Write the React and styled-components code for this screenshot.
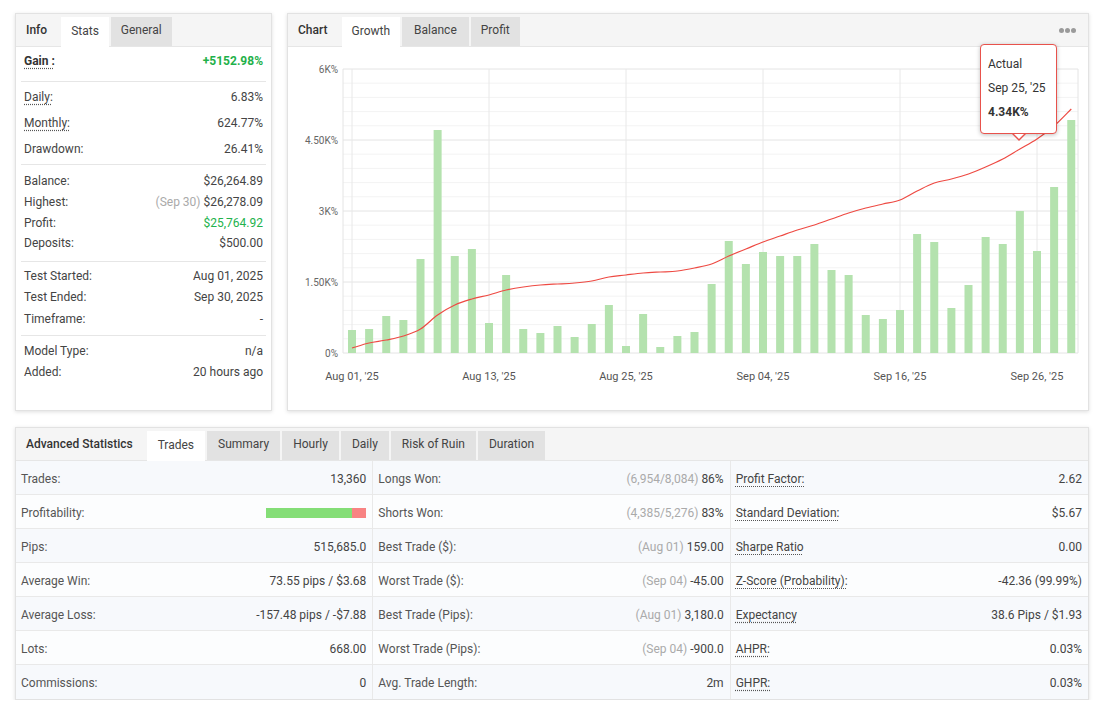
import React from 'react';
import styled, { createGlobalStyle } from 'styled-components';

const GlobalStyle = createGlobalStyle`
  body {
    margin: 0;
    background: #fff;
    font-family: Roboto, "Liberation Sans", sans-serif;
    font-size: 12px;
    color: #444;
  }
  * { box-sizing: border-box; }
`;

const Page = styled.div`
  width: 1100px;
  padding: 13px 11px 0 15px;
`;

const TopRow = styled.div`
  display: flex;
  gap: 15px;
  height: 398px;
`;

const Panel = styled.div`
  position: relative;
  background: #fff;
  border: 1px solid #e2e2e2;
  box-shadow: 0 1px 4px rgba(0, 0, 0, 0.13);
  width: ${p => p.width || 'auto'};
  flex: ${p => (p.grow ? 1 : 'none')};
  display: flex;
  flex-direction: column;
`;

const Header = styled.div`
  height: 33px;
  flex: none;
  display: flex;
  align-items: flex-end;
  padding-left: 10px;
  background: #f5f5f5;
  border-bottom: 1px solid #e6e6e6;
`;

const HeaderLabel = styled.div`
  align-self: center;
  margin-right: 14px;
  font-weight: 500;
  color: #333;
`;

const Tab = styled.div`
  height: ${p => (p.active ? '30px' : '29px')};
  margin-bottom: ${p => (p.active ? '-1px' : '0')};
  margin-right: 2px;
  padding: 0 ${p => p.pad || 10}px 3px;
  display: flex;
  align-items: center;
  background: ${p => (p.active ? '#fff' : '#e2e2e2')};
  color: #444;
`;

const Dots = styled.div`
  margin-left: auto;
  margin-right: 12px;
  align-self: center;
  display: flex;
  gap: 1px;
  span {
    width: 5px;
    height: 5px;
    border-radius: 50%;
    background: #9a9a9a;
  }
`;

/* ---------- stats panel ---------- */

const StatsBody = styled.div`
  padding: 0 5px;
`;

const Group = styled.div`
  padding: ${p => p.pad || '5px 0 6px'};
  border-bottom: ${p => (p.last ? 'none' : '1px solid #e6e6e6')};
`;

const Row = styled.div`
  height: ${p => p.h || 21}px;
  padding: 0 3px;
  display: flex;
  align-items: center;
  justify-content: space-between;
  color: #444;
`;

const Dotted = styled.span`
  font-weight: ${p => (p.bold ? 700 : 400)};
  color: ${p => (p.bold ? '#333' : 'inherit')};
  text-decoration: underline dotted #555;
  text-underline-offset: 3px;
`;

const Value = styled.span`
  color: ${p => p.color || '#444'};
  font-weight: ${p => (p.bold ? 700 : 400)};
`;

const Muted = styled.span`
  color: #aaa;
  margin-right: 3px;
`;

/* ---------- chart ---------- */

const ChartBody = styled.div`
  flex: 1;
`;

const Tooltip = styled.div`
  position: absolute;
  left: 692px;
  top: 30px;
  width: 77px;
  height: 90px;
  padding: 7px 0 0 7px;
  background: #fff;
  border: 1.5px solid #e8524c;
  border-radius: 4px;
  box-shadow: 0 1px 4px rgba(0, 0, 0, 0.25);
  color: #333;
  div { height: 24px; line-height: 24px; }
  &::before, &::after {
    content: '';
    position: absolute;
    left: 31px;
    border-style: solid;
  }
  &::before {
    bottom: -8px;
    border-width: 7px 7px 0 7px;
    border-color: #e8524c transparent transparent transparent;
  }
  &::after {
    bottom: -5.5px;
    left: 32.5px;
    border-width: 5.5px 5.5px 0 5.5px;
    border-color: #fff transparent transparent transparent;
  }
`;

const TipStrong = styled.div`
  font-weight: 700;
`;

/* ---------- advanced ---------- */

const BottomPanel = styled(Panel)`
  margin-top: 16px;
  height: 273px;
`;

const Grid = styled.div`
  display: grid;
  grid-template-columns: repeat(3, 1fr);
`;

const Cell = styled.div`
  height: 34px;
  padding: 2px 6px 0 5px;
  display: flex;
  align-items: center;
  justify-content: space-between;
  background: ${p => (p.odd ? '#fcfdfe' : '#f7f9fc')};
  border-bottom: ${p => (p.last ? 'none' : '1px solid #e9e9e9')};
  border-right: ${p => (p.end ? 'none' : '1px solid #e9e9e9')};
  color: #444;
`;

const CellLabel = styled.span`
  color: #555;
`;

const Bar = styled.div`
  width: 100px;
  height: 10px;
  display: flex;
  div:first-child { background: #84de77; }
  div:last-child { background: #f88383; flex: 1; }
`;

const bars = [330, 329, 316, 320, 259, 130, 256, 249, 323, 275, 329, 333, 326, 337, 324, 305, 346, 314, 347, 336, 332, 284, 241, 264, 252, 256, 256, 244, 270, 275, 315, 319, 310, 234, 242, 308, 285, 237, 244, 211, 251, 187, 120];
const line = [348, 343, 340, 336, 329, 315, 305, 299, 295, 290, 287, 285, 284, 283, 281, 277, 275, 273, 272, 271, 268, 264, 256, 249, 242, 236, 230, 225, 219, 213, 208, 204, 200, 191, 183, 179, 174, 167, 159, 149, 139, 126, 109];
const xAt = i => 352 + i * 17.125;

const xLabels = [
  [0, "Aug 01, '25"], [8, "Aug 13, '25"], [16, "Aug 25, '25"],
  [24, "Sep 04, '25"], [32, "Sep 16, '25"], [40, "Sep 26, '25"],
];
const yLabels = [[69, '6K%'], [140, '4.50K%'], [211, '3K%'], [282, '1.50K%'], [353, '0%']];

function smoothPath(pts) {
  let d = `M${pts[0][0]},${pts[0][1]}`;
  for (let i = 0; i < pts.length - 1; i++) {
    const p0 = pts[i - 1] || pts[i];
    const p1 = pts[i];
    const p2 = pts[i + 1];
    const p3 = pts[i + 2] || p2;
    const c1 = [p1[0] + (p2[0] - p0[0]) / 6, p1[1] + (p2[1] - p0[1]) / 6];
    const c2 = [p2[0] - (p3[0] - p1[0]) / 6, p2[1] - (p3[1] - p1[1]) / 6];
    d += ` C${c1[0].toFixed(1)},${c1[1].toFixed(1)} ${c2[0].toFixed(1)},${c2[1].toFixed(1)} ${p2[0].toFixed(1)},${p2[1]}`;
  }
  return d;
}

const GrowthChart = () => {
  const hLines = [];
  for (let k = 0; k <= 20; k++) {
    const y = 69 + k * 14.2;
    hLines.push(<line key={k} x1={343} x2={1078} y1={y} y2={y} stroke={k % 5 === 0 ? '#e4e4e4' : '#f3f3f3'} strokeWidth="1" />);
  }
  return (
    <svg width="800" height="363" viewBox="288 47 800 363">
      {hLines}
      <line x1={343} x2={343} y1={69} y2={353} stroke="#e4e4e4" />
      <line x1={1078} x2={1078} y1={69} y2={353} stroke="#e4e4e4" />
      {xLabels.map(([i]) => (
        <line key={i} x1={xAt(i)} x2={xAt(i)} y1={69} y2={353} stroke="#e8e8e8" />
      ))}
      {bars.map((top, i) => (
        <rect key={i} x={xAt(i) - 4} y={top} width="8" height={353 - top} fill="#b4e2ae" />
      ))}
      <path d={smoothPath(line.map((y, i) => [xAt(i), y]))} fill="none" stroke="#ee4a43" strokeWidth="1.2" />
      {yLabels.map(([y, t]) => (
        <text key={t} x={338} y={y + 3.5} textAnchor="end" fontSize="10" fill="#666" fontFamily="Roboto, sans-serif">{t}</text>
      ))}
      {xLabels.map(([i, t]) => (
        <text key={t} x={xAt(i)} y={380} textAnchor="middle" fontSize="11" fill="#555" fontFamily="Roboto, sans-serif">{t}</text>
      ))}
    </svg>
  );
};

const adv = [
  [
    ['Trades:', '13,360'],
    ['Profitability:', 'bar'],
    ['Pips:', '515,685.0'],
    ['Average Win:', '73.55 pips / $3.68'],
    ['Average Loss:', '-157.48 pips / -$7.88'],
    ['Lots:', '668.00'],
    ['Commissions:', '0'],
  ],
  [
    ['Longs Won:', '86%', '(6,954/8,084)'],
    ['Shorts Won:', '83%', '(4,385/5,276)'],
    ['Best Trade ($):', '159.00', '(Aug 01)'],
    ['Worst Trade ($):', '-45.00', '(Sep 04)'],
    ['Best Trade (Pips):', '3,180.0', '(Aug 01)'],
    ['Worst Trade (Pips):', '-900.0', '(Sep 04)'],
    ['Avg. Trade Length:', '2m'],
  ],
  [
    ['Profit Factor:', '2.62'],
    ['Standard Deviation:', '$5.67'],
    ['Sharpe Ratio', '0.00'],
    ['Z-Score (Probability):', '-42.36 (99.99%)'],
    ['Expectancy', '38.6 Pips / $1.93'],
    ['AHPR:', '0.03%'],
    ['GHPR:', '0.03%'],
  ],
];

const App = () => {
  const cells = [];
  for (let r = 0; r < 7; r++) {
    for (let c = 0; c < 3; c++) {
      const [label, value, note] = adv[c][r];
      cells.push(
        <Cell key={`${r}-${c}`} odd={r % 2 === 1} last={r === 6} end={c === 2}>
          {c === 2 ? <Dotted>{label}</Dotted> : <CellLabel>{label}</CellLabel>}
          {value === 'bar' ? (
            <Bar><div style={{ width: '86%' }} /><div /></Bar>
          ) : (
            <Value>{note && <Muted>{note}</Muted>}{value}</Value>
          )}
        </Cell>
      );
    }
  }

  return (
    <>
      <GlobalStyle />
      <Page>
        <TopRow>
          <Panel width="257px">
            <Header>
              <HeaderLabel>Info</HeaderLabel>
              <Tab active>Stats</Tab>
              <Tab>General</Tab>
            </Header>
            <StatsBody>
              <Group pad="1px 0 7px">
                <Row h={26}>
                  <Dotted bold>Gain :</Dotted>
                  <Value bold color="#1fb14a">+5152.98%</Value>
                </Row>
              </Group>
              <Group pad="2px 0 2px">
                <Row h={26}><Dotted>Daily:</Dotted><Value>6.83%</Value></Row>
                <Row h={26}><Dotted>Monthly:</Dotted><Value>624.77%</Value></Row>
                <Row h={26}><span>Drawdown:</span><Value>26.41%</Value></Row>
              </Group>
              <Group pad="6px 0 7px">
                <Row h={20.7}><span>Balance:</span><Value>$26,264.89</Value></Row>
                <Row h={20.7}><span>Highest:</span><Value><Muted>(Sep 30)</Muted>$26,278.09</Value></Row>
                <Row h={20.7}><span>Profit:</span><Value color="#22b24c">$25,764.92</Value></Row>
                <Row h={20.7}><span>Deposits:</span><Value>$500.00</Value></Row>
              </Group>
              <Group pad="3px 0 6px">
                <Row h={21.5}><span>Test Started:</span><Value>Aug 01, 2025</Value></Row>
                <Row h={21.5}><span>Test Ended:</span><Value>Sep 30, 2025</Value></Row>
                <Row h={21.5}><span>Timeframe:</span><Value>-</Value></Row>
              </Group>
              <Group pad="4px 0 0" last>
                <Row><span>Model Type:</span><Value>n/a</Value></Row>
                <Row><span>Added:</span><Value>20 hours ago</Value></Row>
              </Group>
            </StatsBody>
          </Panel>

          <Panel grow>
            <Header>
              <HeaderLabel>Chart</HeaderLabel>
              <Tab active>Growth</Tab>
              <Tab pad={12}>Balance</Tab>
              <Tab>Profit</Tab>
              <Dots><span /><span /><span /></Dots>
            </Header>
            <ChartBody>
              <GrowthChart />
            </ChartBody>
            <Tooltip>
              <div>Actual</div>
              <div>Sep 25, '25</div>
              <TipStrong>4.34K%</TipStrong>
            </Tooltip>
          </Panel>
        </TopRow>

        <BottomPanel>
          <Header>
            <HeaderLabel>Advanced Statistics</HeaderLabel>
            <Tab active pad={11}>Trades</Tab>
            <Tab pad={11}>Summary</Tab>
            <Tab pad={11}>Hourly</Tab>
            <Tab pad={11}>Daily</Tab>
            <Tab pad={11}>Risk of Ruin</Tab>
            <Tab pad={11}>Duration</Tab>
          </Header>
          <Grid>{cells}</Grid>
        </BottomPanel>
      </Page>
    </>
  );
};

export default App;
